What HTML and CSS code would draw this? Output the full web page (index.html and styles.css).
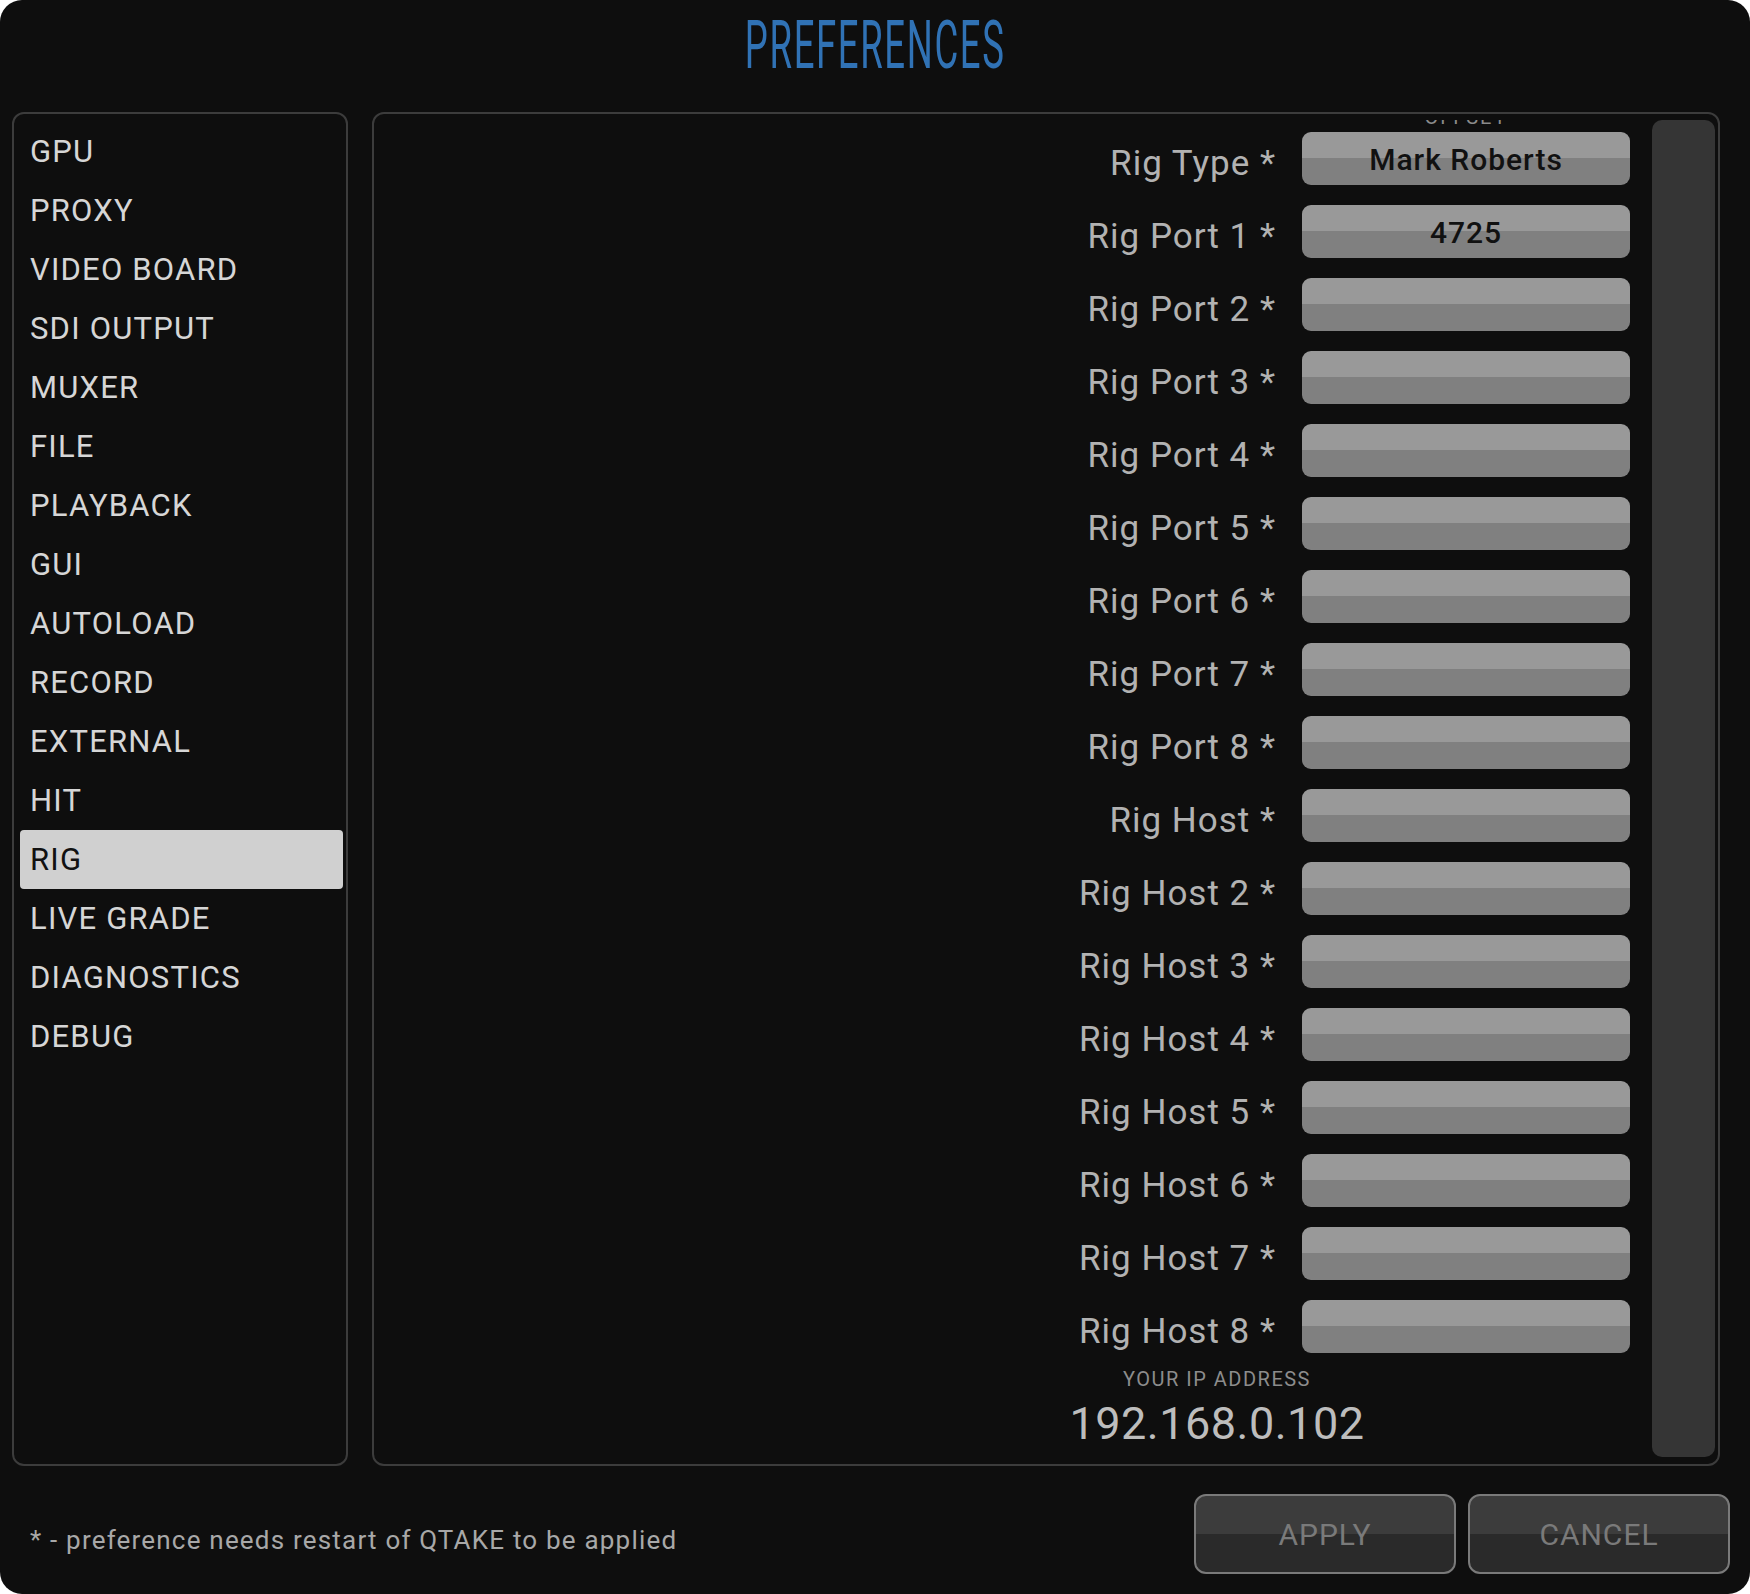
FILE: index.html
```html
<!DOCTYPE html>
<html lang="en">
<head>
    <meta charset="UTF-8">
    <meta name="viewport" content="width=device-width, initial-scale=1.0">
    <title>Preferences</title>
    <link rel="stylesheet" href="styles.css">
</head>
<body>
    <div class="window">
        <div class="titlebar">
            <h1 class="title">PREFERENCES</h1>
        </div>

        <div class="main">
            <ul class="sidebar">
                <li>GPU</li>
                <li>PROXY</li>
                <li>VIDEO BOARD</li>
                <li>SDI OUTPUT</li>
                <li>MUXER</li>
                <li>FILE</li>
                <li>PLAYBACK</li>
                <li>GUI</li>
                <li>AUTOLOAD</li>
                <li>RECORD</li>
                <li>EXTERNAL</li>
                <li>HIT</li>
                <li class="active">RIG</li>
                <li>LIVE GRADE</li>
                <li>DIAGNOSTICS</li>
                <li>DEBUG</li>
            </ul>

            <div class="content">
                <div class="fields">
                    <div class="clip-title">OFFSET</div>
                    <div class="grid">
                        <label>Rig Type *</label>
                        <div class="input">Mark Roberts</div>
                        <label>Rig Port 1 *</label>
                        <div class="input">4725</div>
                        <label>Rig Port 2 *</label>
                        <div class="input"></div>
                        <label>Rig Port 3 *</label>
                        <div class="input"></div>
                        <label>Rig Port 4 *</label>
                        <div class="input"></div>
                        <label>Rig Port 5 *</label>
                        <div class="input"></div>
                        <label>Rig Port 6 *</label>
                        <div class="input"></div>
                        <label>Rig Port 7 *</label>
                        <div class="input"></div>
                        <label>Rig Port 8 *</label>
                        <div class="input"></div>
                        <label>Rig Host *</label>
                        <div class="input"></div>
                        <label>Rig Host 2 *</label>
                        <div class="input"></div>
                        <label>Rig Host 3 *</label>
                        <div class="input"></div>
                        <label>Rig Host 4 *</label>
                        <div class="input"></div>
                        <label>Rig Host 5 *</label>
                        <div class="input"></div>
                        <label>Rig Host 6 *</label>
                        <div class="input"></div>
                        <label>Rig Host 7 *</label>
                        <div class="input"></div>
                        <label>Rig Host 8 *</label>
                        <div class="input"></div>
                    </div>

                    <div class="ip-box">
                        <div class="ip-label">YOUR IP ADDRESS</div>
                        <div class="ip-value">192.168.0.102</div>
                    </div>
                </div>
                <div class="scrollbar"></div>
            </div>
        </div>

        <div class="footer">
            <p class="note">* - preference needs restart of QTAKE to be applied</p>
            <div class="buttons">
                <button class="btn">APPLY</button>
                <button class="btn">CANCEL</button>
            </div>
        </div>
    </div>
</body>
</html>
```

FILE: styles.css
```css
body {
    margin: 0;
    padding: 0;
    background-color: #ffffff;
    font-family: Roboto, "Liberation Sans", sans-serif;
}

.window {
    width: 1750px;
    height: 1594px;
    background-color: #0e0e0e;
    border-radius: 22px;
    display: flex;
    flex-direction: column;
    overflow: hidden;
}

.titlebar {
    height: 112px;
    display: flex;
    justify-content: center;
}

.title {
    margin: 0;
    padding-top: 7px;
    font-size: 67px;
    font-weight: 400;
    line-height: 76px;
    color: #3072b5;
    letter-spacing: 3px;
    transform: scaleX(0.545);
}

.main {
    height: 1354px;
    display: flex;
    padding: 0 30px 0 12px;
    gap: 24px;
}

/* Menu izquierdo */
.sidebar {
    width: 336px;
    box-sizing: border-box;
    margin: 0;
    list-style: none;
    padding: 8px 3px 0 6px;
    border: 2px solid #3c3c3c;
    border-radius: 12px;
}

.sidebar li {
    height: 59px;
    line-height: 59px;
    padding-left: 10px;
    font-size: 31px;
    letter-spacing: 1.2px;
    color: #d6d6d6;
}

.sidebar li.active {
    background-color: #d0d0d0;
    color: #111111;
    border-radius: 4px;
}

.content {
    flex: 1;
    display: flex;
    border: 2px solid #3c3c3c;
    border-radius: 12px;
}

.fields {
    flex: 1;
    margin-top: 6px;
    overflow: hidden;
    display: flex;
    flex-direction: column;
}

.clip-title {
    flex: none;
    height: 20px;
    margin-top: -13px;
    margin-left: auto;
    margin-right: 22px;
    width: 328px;
    text-align: center;
    font-size: 20px;
    line-height: 20px;
    letter-spacing: 2px;
    color: #8a8a8a;
}

.grid {
    margin-top: 5px;
    display: grid;
    grid-template-columns: 1fr 328px;
    column-gap: 26px;
    row-gap: 20px;
    padding-right: 22px;
}

.grid label {
    text-align: right;
    align-self: center;
    padding-top: 10px;
    font-size: 35px;
    letter-spacing: 1px;
    color: #b2b2b2;
}

.input {
    height: 53px;
    line-height: 56px;
    border-radius: 9px;
    background: linear-gradient(#999999 0, #999999 49%, #808080 49%, #808080 100%);
    text-align: center;
    font-size: 30px;
    font-weight: 500;
    letter-spacing: 1px;
    color: #111111;
}

.ip-box {
    width: 520px;
    margin: 14px 175px 0 auto;
    text-align: center;
}

.ip-label {
    font-size: 20px;
    letter-spacing: 1.5px;
    color: #8c8c8c;
}

.ip-value {
    margin-top: 6px;
    font-size: 45px;
    letter-spacing: 0.5px;
    color: #bdbdbd;
}

.scrollbar {
    width: 63px;
    margin: 6px 3px 7px 0;
    background-color: #353535;
    border-radius: 10px;
}

/* Pie */
.footer {
    flex: 1;
    display: flex;
    justify-content: space-between;
    align-items: center;
    padding: 8px 20px 0 30px;
}

.note {
    margin: 12px 0 0 0;
    font-size: 26px;
    letter-spacing: 1.2px;
    color: #a8a8a8;
}

.buttons {
    display: flex;
    gap: 12px;
}

.btn {
    width: 262px;
    height: 80px;
    border: 2px solid #7a7a7a;
    border-radius: 12px;
    background: linear-gradient(#3c3c3c 0, #3c3c3c 50%, #2a2a2a 50%, #2a2a2a 100%);
    font-family: Roboto, "Liberation Sans", sans-serif;
    font-size: 30px;
    letter-spacing: 1px;
    color: #7a7a7a;
}
```
